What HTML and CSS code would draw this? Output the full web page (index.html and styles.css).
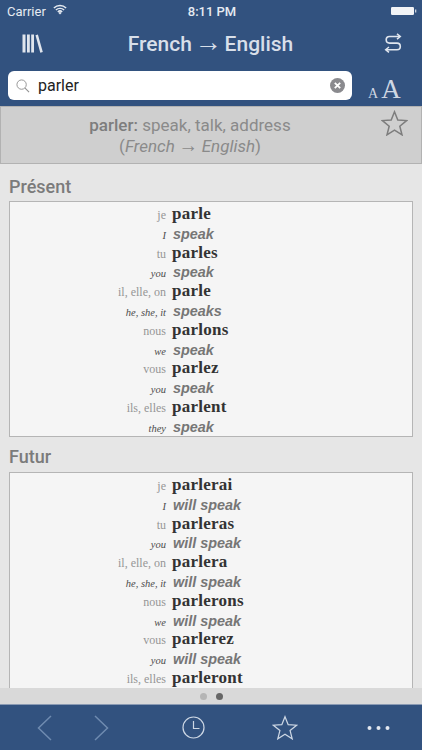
FILE: index.html
```html
<!DOCTYPE html>
<html lang="fr">
<head>
<meta charset="utf-8">
<title>French → English</title>
<link rel="stylesheet" href="styles.css">
</head>
<body>
<div class="app">
  <header class="top">
    <div class="status">
      <div class="status-left"><span>Carrier</span>
        <svg class="wifi" width="14" height="11" viewBox="0 0 16 12"><path d="M1 4.200a10 10 0 0 1 14 0M3.300 6.600a6.800 6.800 0 0 1 9.400 0M5.500 8.800a3.600 3.600 0 0 1 5 0" fill="none" stroke="#e6ebf2" stroke-width="1.700"/><path d="M8 11.800l-1.800-1.900a2.500 2.500 0 0 1 3.600 0z" fill="#e6ebf2"/></svg>
      </div>
      <div class="clock">8:11 PM</div>
      <div class="status-right">
        <svg width="26" height="10" viewBox="0 0 26 10"><rect x="0" y="1" width="23" height="8" rx="1.200" fill="#f1f3f6"/><rect x="24" y="3.500" width="1.300" height="3" fill="#c8d0dc"/></svg>
      </div>
    </div>
    <div class="nav">
      <svg class="nav-lib" width="21" height="19" viewBox="0 0 21 19"><g fill="#e0e5ed"><rect x="0.500" y="0.500" width="3" height="18"/><rect x="5" y="0.500" width="2.800" height="18"/><rect x="9.200" y="0.500" width="2.800" height="18"/><path d="M13.500 1.200l2.400-.8 4.900 17.500-2.500.8z"/></g></svg>
      <h1 class="nav-title">French <span class="arrow">→</span> English</h1>
      <svg class="nav-swap" width="18" height="20" viewBox="0 0 18 20"><path d="M16 3.500H5.500a3.300 3.300 0 0 0 0 6.600h7.500a3.300 3.300 0 0 1 0 6.600H2" fill="none" stroke="#dfe5ee" stroke-width="1.600"/><path d="M13 0.800l3.300 2.700-3.300 2.700M5 14l-3.300 2.700 3.300 2.700" fill="none" stroke="#dfe5ee" stroke-width="1.500"/></svg>
    </div>
    <div class="search-row">
      <div class="search">
        <svg width="14" height="14" viewBox="0 0 15 15"><circle cx="6" cy="6" r="5" fill="none" stroke="#8f8f8f" stroke-width="1"/><path d="M9.700 9.700L14 14" stroke="#8f8f8f" stroke-width="1.200"/></svg>
        <span class="search-text">parler</span>
        <svg class="clear" width="15" height="15" viewBox="0 0 15 15"><circle cx="7.500" cy="7.500" r="7.500" fill="#8a8a8e"/><path d="M4.800 4.800l5.400 5.400M10.200 4.800l-5.400 5.400" stroke="#fff" stroke-width="1.800"/></svg>
      </div>
      <div class="font-size"><span class="a-small">A</span><span class="a-big">A</span></div>
    </div>
  </header>

  <section class="banner">
    <div class="banner-text">
      <div><b>parler:</b> speak, talk, address</div>
      <div class="banner-sub">(<i>French <span class="arrow-small">→</span> English</i>)</div>
    </div>
    <svg class="banner-star" width="27" height="26" viewBox="0 0 27 26"><path d="M13.500 1.800l3.300 8.200 8.800.6-6.800 5.600 2.200 8.600-7.500-4.700-7.500 4.700 2.200-8.600-6.800-5.600 8.800-.6z" fill="none" stroke="#7d7d7d" stroke-width="1.500"/></svg>
  </section>

  <main class="content">
    <h2 class="tense">Présent</h2>
    <div class="table">
      <div class="row"><span class="pron">je</span><span class="fr">parle</span></div>
      <div class="row"><span class="pron-en">I</span><span class="en">speak</span></div>
      <div class="row"><span class="pron">tu</span><span class="fr">parles</span></div>
      <div class="row"><span class="pron-en">you</span><span class="en">speak</span></div>
      <div class="row"><span class="pron">il, elle, on</span><span class="fr">parle</span></div>
      <div class="row"><span class="pron-en">he, she, it</span><span class="en">speaks</span></div>
      <div class="row"><span class="pron">nous</span><span class="fr">parlons</span></div>
      <div class="row"><span class="pron-en">we</span><span class="en">speak</span></div>
      <div class="row"><span class="pron">vous</span><span class="fr">parlez</span></div>
      <div class="row"><span class="pron-en">you</span><span class="en">speak</span></div>
      <div class="row"><span class="pron">ils, elles</span><span class="fr">parlent</span></div>
      <div class="row"><span class="pron-en">they</span><span class="en">speak</span></div>
    </div>
    <h2 class="tense">Futur</h2>
    <div class="table">
      <div class="row"><span class="pron">je</span><span class="fr">parlerai</span></div>
      <div class="row"><span class="pron-en">I</span><span class="en">will speak</span></div>
      <div class="row"><span class="pron">tu</span><span class="fr">parleras</span></div>
      <div class="row"><span class="pron-en">you</span><span class="en">will speak</span></div>
      <div class="row"><span class="pron">il, elle, on</span><span class="fr">parlera</span></div>
      <div class="row"><span class="pron-en">he, she, it</span><span class="en">will speak</span></div>
      <div class="row"><span class="pron">nous</span><span class="fr">parlerons</span></div>
      <div class="row"><span class="pron-en">we</span><span class="en">will speak</span></div>
      <div class="row"><span class="pron">vous</span><span class="fr">parlerez</span></div>
      <div class="row"><span class="pron-en">you</span><span class="en">will speak</span></div>
      <div class="row"><span class="pron">ils, elles</span><span class="fr">parleront</span></div>
    </div>
  </main>

  <div class="dots"><span class="dot"></span><span class="dot dot-on"></span></div>

  <footer class="toolbar">
    <svg class="tool" width="15" height="26" viewBox="0 0 15 26"><path d="M14 1L1.500 13 14 25" fill="none" stroke="#6f8bb0" stroke-width="1.500"/></svg>
    <svg class="tool" width="15" height="26" viewBox="0 0 15 26"><path d="M1 1l12.500 12L1 25" fill="none" stroke="#6f8bb0" stroke-width="1.500"/></svg>
    <svg class="tool" width="23" height="23" viewBox="0 0 23 23"><circle cx="11.500" cy="11.500" r="10.500" fill="none" stroke="#cdd7e4" stroke-width="1.200"/><path d="M11.500 5v7.500h6" fill="none" stroke="#cdd7e4" stroke-width="1.200"/></svg>
    <svg class="tool" width="26" height="25" viewBox="0 0 27 26"><path d="M13.500 1.800l3.300 8.200 8.800.6-6.800 5.600 2.200 8.600-7.500-4.700-7.500 4.700 2.200-8.600-6.800-5.600 8.800-.6z" fill="none" stroke="#cdd7e4" stroke-width="1.300"/></svg>
    <svg class="tool" width="23" height="6" viewBox="0 0 23 6"><circle cx="2.500" cy="3" r="2" fill="#e3e8f0"/><circle cx="11.500" cy="3" r="2" fill="#e3e8f0"/><circle cx="20.500" cy="3" r="2" fill="#e3e8f0"/></svg>
  </footer>
</div>
</body>
</html>
```
FILE: styles.css
```css
* { box-sizing: border-box; }
html, body { margin: 0; padding: 0; }
body { font-family: "Liberation Sans", Arial, sans-serif; background: #e6e6e6; }
.app { width: 422px; height: 750px; display: flex; flex-direction: column; overflow: hidden; }

.top { background: #32527f; height: 106px; flex: none; color: #dfe5ee; }
.status { height: 21px; display: grid; grid-template-columns: 1fr auto 1fr; align-items: center; padding: 1px 5px 0 7px; font-family: Roboto, "Liberation Sans", sans-serif; font-size: 13px; color: #e6ebf2; }
.status-left { display: flex; align-items: center; gap: 7px; }
.wifi { margin-top: -3px; }
.clock { font-weight: 500; }
.status-right { display: flex; justify-content: flex-end; }

.nav { height: 44px; display: flex; align-items: center; padding: 0 13px 0 22px; }
.nav-title { flex: 1; margin: 0; padding: 2px 6px 0 0; text-align: center; font-family: Roboto, "Liberation Sans", sans-serif; font-weight: 500; font-size: 21px; word-spacing: -2.500px; color: #d8dfe9; }
.arrow { font-family: "Liberation Sans", sans-serif; font-weight: 400; font-style: normal; font-size: 1.300em; line-height: 0; }
.nav-lib { flex: none; }
.nav-swap { flex: none; margin-right: 7px; }

.search-row { display: flex; align-items: flex-start; padding: 6px 0 0 8px; height: 41px; }
.search { width: 344px; height: 29px; background: #fff; border-radius: 6px; display: flex; align-items: center; padding: 0 7px 0 8px; gap: 8px; }
.search-text { flex: 1; font-family: Roboto, "Liberation Sans", sans-serif; font-size: 16px; color: #222; }
.font-size { margin: 1px 0 0 16px; padding-top: 2px; display: flex; align-items: baseline; gap: 3px; font-family: "Liberation Serif", serif; color: #cfd7e3; line-height: 30px; }
.a-small { font-size: 14px; }
.a-big { font-size: 27px; }

.banner { height: 58px; flex: none; position: relative; background: #cfcfcf; border: 1px solid #b2b2b2; display: flex; justify-content: center; align-items: center; padding: 1px 42px 0 0; }
.banner-text { text-align: center; font-family: Roboto, "Liberation Sans", sans-serif; font-size: 17px; line-height: 21px; color: #8a8a8a; }
.banner-text b { font-weight: 500; color: #7d7d7d; }
.banner-sub { word-spacing: -0.500px; }
.arrow-small { font-family: "Liberation Sans", sans-serif; font-style: normal; font-size: 1.150em; line-height: 0; }
.banner-star { position: absolute; right: 13px; top: 3px; }

.content { flex: 1; min-height: 0; overflow: hidden; padding: 0 9px; }
.tense { margin: 0; height: 37px; padding-top: 12px; font-family: Roboto, "Liberation Sans", sans-serif; font-size: 18px; line-height: 22px; font-weight: 500; color: #7b7b7b; }
.table + .tense { height: 35px; padding-top: 9px; }
.table { background: #f5f5f5; border: 1px solid #b5b5b5; height: 236px; padding-top: 2px; }
.row { height: 19.300px; display: flex; align-items: baseline; gap: 6px; white-space: nowrap; line-height: 19.300px; }
.row:nth-child(even) { padding-top: 1.500px; }
.pron, .pron-en { width: 156px; flex: none; text-align: right; font-family: "Liberation Serif", serif; }
.pron { font-size: 12px; color: #969696; }
.pron-en { font-size: 10.500px; font-style: italic; color: #4c4c4c; }
.fr { font-family: "Liberation Serif", serif; font-weight: 700; font-size: 17px; color: #333; letter-spacing: 0.250px; }
.en { margin-left: 1px; font-family: "Liberation Sans", sans-serif; font-weight: 700; font-style: italic; font-size: 14.400px; color: #767676; }

.dots { height: 16px; flex: none; background: #d9d9d9; display: flex; justify-content: center; align-items: center; gap: 9px; padding-top: 1px; }
.dot { width: 7px; height: 7px; border-radius: 50%; background: #b5b5b5; }
.dot-on { background: #666; }

.toolbar { height: 46px; flex: none; background: #32527f; border-top: 1px solid #8a9ab3; display: flex; align-items: center; padding-left: 37px; }
.tool { flex: none; }
.tool:nth-child(2) { margin-left: 42px; }
.tool:nth-child(3) { margin-left: 73px; }
.tool:nth-child(4) { margin-left: 67px; }
.tool:nth-child(5) { margin-left: 69px; }
```
